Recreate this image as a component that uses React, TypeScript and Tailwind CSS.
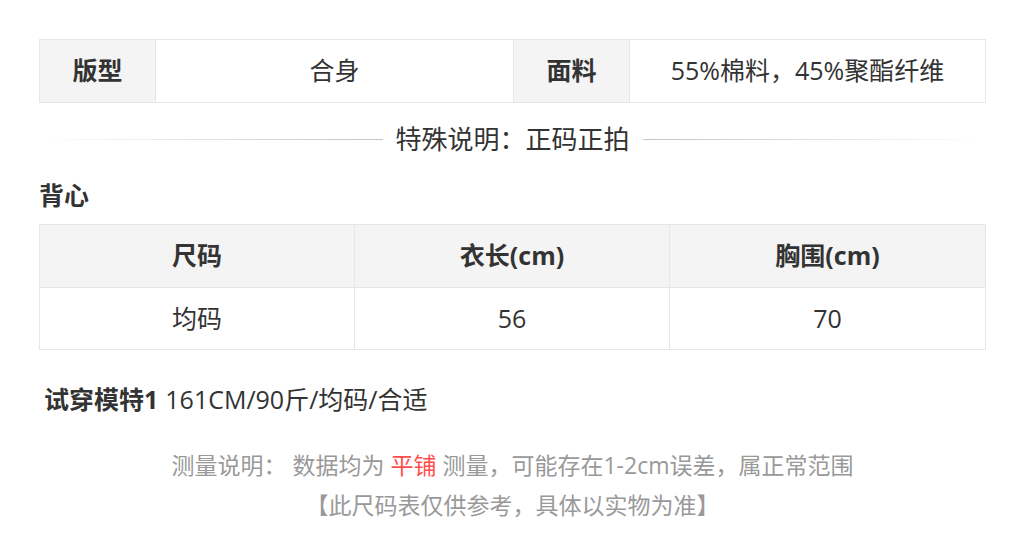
import React from "react";

const font = { fontFamily: '"Open Sans", "Noto Sans CJK SC", sans-serif' };

export default function App() {
  return (
    <div className="w-[1024px] h-[539px] bg-white text-[#333] overflow-hidden" style={font}>
      <div className="pl-[39px] pr-[38px] pt-[39px]">
        {/* spec table */}
        <div className="grid grid-cols-[116px_358px_116px_1fr] border border-[#e6e6e6] h-[64px] text-[25px]">
          <div className="bg-[#f4f4f4] flex items-center justify-center font-bold border-r border-[#e6e6e6]">版型</div>
          <div className="flex items-center justify-center border-r border-[#e6e6e6]">合身</div>
          <div className="bg-[#f4f4f4] flex items-center justify-center font-bold border-r border-[#e6e6e6]">面料</div>
          <div className="flex items-center justify-center">55%棉料，45%聚酯纤维</div>
        </div>

        {/* divider */}
        <div className="flex items-center h-[48px] mt-[12px]">
          <div className="flex-1 h-px bg-gradient-to-r from-[#ffffff] to-[#c4c4c4]" />
          <div className="px-[13px] text-[26px] text-[#333]">特殊说明：正码正拍</div>
          <div className="flex-1 h-px bg-gradient-to-r from-[#c4c4c4] to-[#ffffff]" />
        </div>

        {/* title */}
        <div className="mt-[15px] h-[36px] flex items-center text-[25px] font-bold text-[#333]">背心</div>

        {/* size table */}
        <div className="mt-[10px] border border-[#e6e6e6] text-[25px]">
          <div className="grid grid-cols-3 h-[63px] bg-[#f4f4f4] font-bold border-b border-[#e6e6e6]">
            <div className="flex items-center justify-center border-r border-[#e6e6e6]">尺码</div>
            <div className="flex items-center justify-center border-r border-[#e6e6e6]">衣长(cm)</div>
            <div className="flex items-center justify-center">胸围(cm)</div>
          </div>
          <div className="grid grid-cols-3 h-[61px]">
            <div className="flex items-center justify-center border-r border-[#e6e6e6]">均码</div>
            <div className="flex items-center justify-center border-r border-[#e6e6e6]">56</div>
            <div className="flex items-center justify-center">70</div>
          </div>
        </div>

        {/* model */}
        <div className="mt-[32px] pl-[5px] h-[36px] flex items-center text-[25px] text-[#333]">
          <span className="font-bold">试穿模特1</span>
          <span className="ml-[7px]">161CM/90斤/均码/合适</span>
        </div>

        {/* notes */}
        <div className="mt-[27px] text-center text-[23px] text-[#999] leading-[40px]">
          <div>
            测量说明： 数据均为 <span className="text-[#ff4d4d]">平铺</span> 测量，可能存在1-2cm误差，属正常范围
          </div>
          <div>【此尺码表仅供参考，具体以实物为准】</div>
        </div>
      </div>
    </div>
  );
}
